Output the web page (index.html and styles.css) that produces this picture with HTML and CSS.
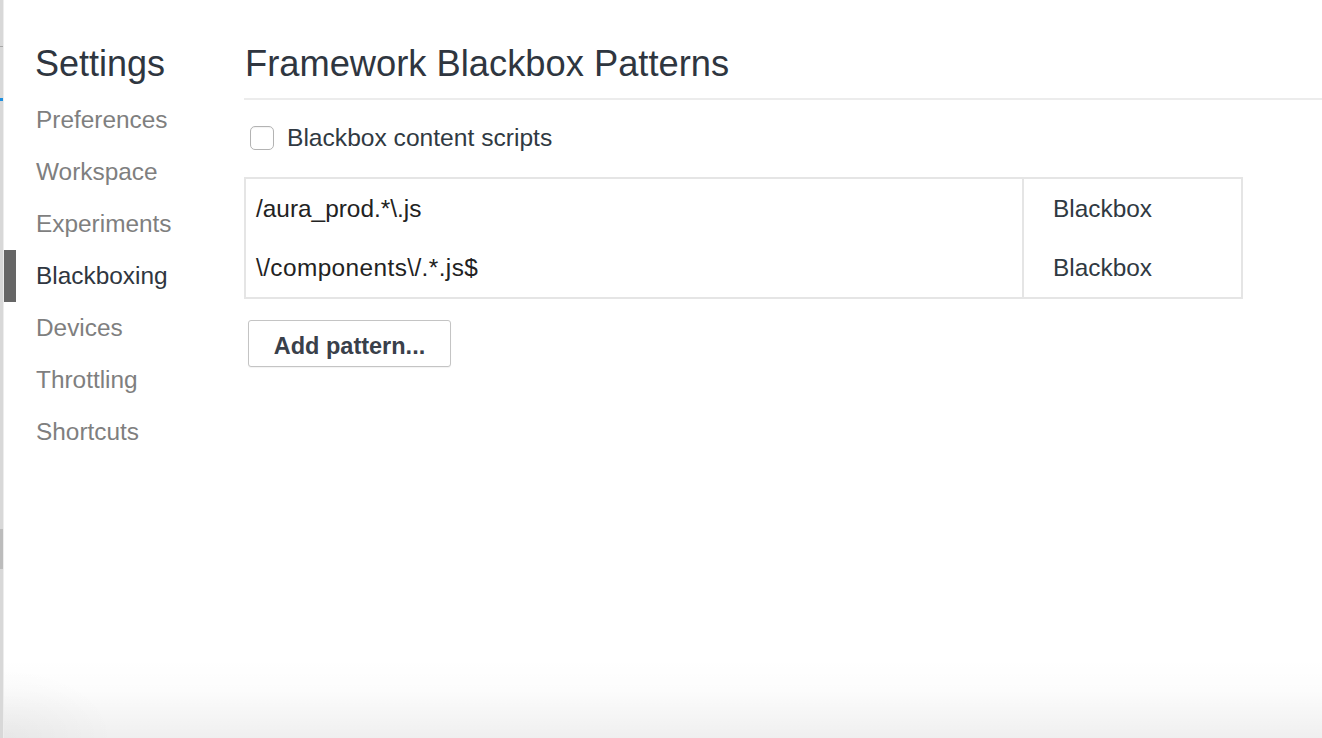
FILE: index.html
```html
<!DOCTYPE html>
<html lang="en">
<head>
<meta charset="utf-8">
<title>Settings</title>
<link rel="stylesheet" href="styles.css">
</head>
<body>
<div class="window">
  <div class="edge">
    <div class="edge-tick"></div>
    <div class="edge-blue"></div>
    <div class="edge-thumb"></div>
  </div>
  <nav class="sidebar">
    <h1 class="sidebar-title">Settings</h1>
    <ul class="tabs">
      <li class="tab">Preferences</li>
      <li class="tab">Workspace</li>
      <li class="tab">Experiments</li>
      <li class="tab active">Blackboxing</li>
      <li class="tab">Devices</li>
      <li class="tab">Throttling</li>
      <li class="tab">Shortcuts</li>
    </ul>
  </nav>
  <main class="content">
    <h2 class="content-title">Framework Blackbox Patterns</h2>
    <label class="check-row">
      <span class="checkbox"></span>
      <span class="check-label">Blackbox content scripts</span>
    </label>
    <div class="patterns">
      <div class="pattern-row">
        <div class="pattern-cell">/aura_prod.*\.js</div>
        <div class="behavior-cell">Blackbox</div>
      </div>
      <div class="pattern-row">
        <div class="pattern-cell">\/components\/.*.js$</div>
        <div class="behavior-cell">Blackbox</div>
      </div>
    </div>
    <button class="add-btn" type="button">Add pattern...</button>
  </main>
  <div class="bottom-fade"></div>
</div>
</body>
</html>
```
FILE: styles.css
```css
html, body {
  margin: 0;
  padding: 0;
  background: #ffffff;
}
body {
  font-family: "Liberation Sans", Arial, sans-serif;
  color: #303942;
  overflow: hidden;
}
.window {
  position: relative;
  display: flex;
  width: 1322px;
  height: 738px;
  overflow: hidden;
}
.edge {
  position: relative;
  width: 3px;
  flex: none;
  background: #d8d8d8;
  border-right: 1px solid #ededed;
}
.edge-tick {
  position: absolute;
  top: 46px;
  left: 0;
  width: 3px;
  height: 1px;
  background: #a8a8a8;
}
.edge-blue {
  position: absolute;
  top: 98px;
  left: 0;
  width: 3px;
  height: 3px;
  background: #1e8fdf;
}
.edge-thumb {
  position: absolute;
  top: 529px;
  left: 0;
  width: 3px;
  height: 40px;
  background: #bcbcbc;
}
.sidebar {
  width: 240px;
  flex: none;
}
.sidebar-title {
  margin: 0;
  padding: 34px 0 0 31px;
  height: 60px;
  line-height: 60px;
  font-size: 36px;
  font-weight: normal;
  color: #2f3640;
}
.tabs {
  list-style: none;
  margin: 0;
  padding: 0;
}
.tab {
  height: 52px;
  line-height: 52px;
  font-size: 24.4px;
  color: #7f7f7f;
  border-left: 12px solid transparent;
  padding-left: 20px;
}
.tab.active {
  color: #2f3640;
  border-left-color: #666666;
}
.content {
  flex: 1;
  min-width: 0;
}
.content-title {
  margin: 0;
  padding: 34px 0 4px 1px;
  line-height: 60px;
  font-size: 36.3px;
  font-weight: normal;
  color: #2f3640;
  border-bottom: 2px solid #ececec;
}
.check-row {
  display: flex;
  align-items: center;
  margin: 26px 0 0 6px;
  height: 24px;
  gap: 13px;
}
.checkbox {
  box-sizing: border-box;
  width: 24px;
  height: 24px;
  border: 1px solid #b3b3b3;
  border-radius: 5px;
  background: #fff;
  box-shadow: inset 0 1px 1px rgba(0,0,0,0.05);
}
.check-label {
  font-size: 24.6px;
  color: #303942;
}
.patterns {
  margin-top: 27px;
  width: 999px;
  box-sizing: border-box;
  border: 2px solid #e5e5e5;
}
.pattern-row {
  display: grid;
  grid-template-columns: 776px 1fr;
  height: 59px;
  align-items: center;
}
.pattern-cell {
  padding-left: 10px;
  font-size: 24.4px;
  color: #222;
  line-height: 59px;
}
.pattern-row + .pattern-row .pattern-cell {
  letter-spacing: 0.4px;
}
.behavior-cell {
  border-left: 2px solid #e5e5e5;
  padding-left: 29px;
  font-size: 24.4px;
  color: #303942;
  line-height: 59px;
}
.add-btn {
  display: block;
  margin: 21px 0 0 4px;
  width: 203px;
  height: 47px;
  box-sizing: border-box;
  border: 1px solid #c4c4c4;
  border-radius: 3px;
  background: #fff;
  box-shadow: 0 1px 1px rgba(0,0,0,0.05);
  font-family: "Liberation Sans", Arial, sans-serif;
  font-size: 23.5px;
  font-weight: bold;
  color: #39404a;
  padding: 5px 0 0;
}
.bottom-fade {
  position: absolute;
  left: 4px;
  right: 0;
  bottom: 0;
  height: 80px;
  pointer-events: none;
  background:
    radial-gradient(ellipse 110px 70px at 0 100%, rgba(0,0,0,0.035), rgba(0,0,0,0) 100%),
    linear-gradient(to bottom, rgba(0,0,0,0) 0%, rgba(0,0,0,0.012) 40%, rgba(0,0,0,0.062) 100%);
}
```
